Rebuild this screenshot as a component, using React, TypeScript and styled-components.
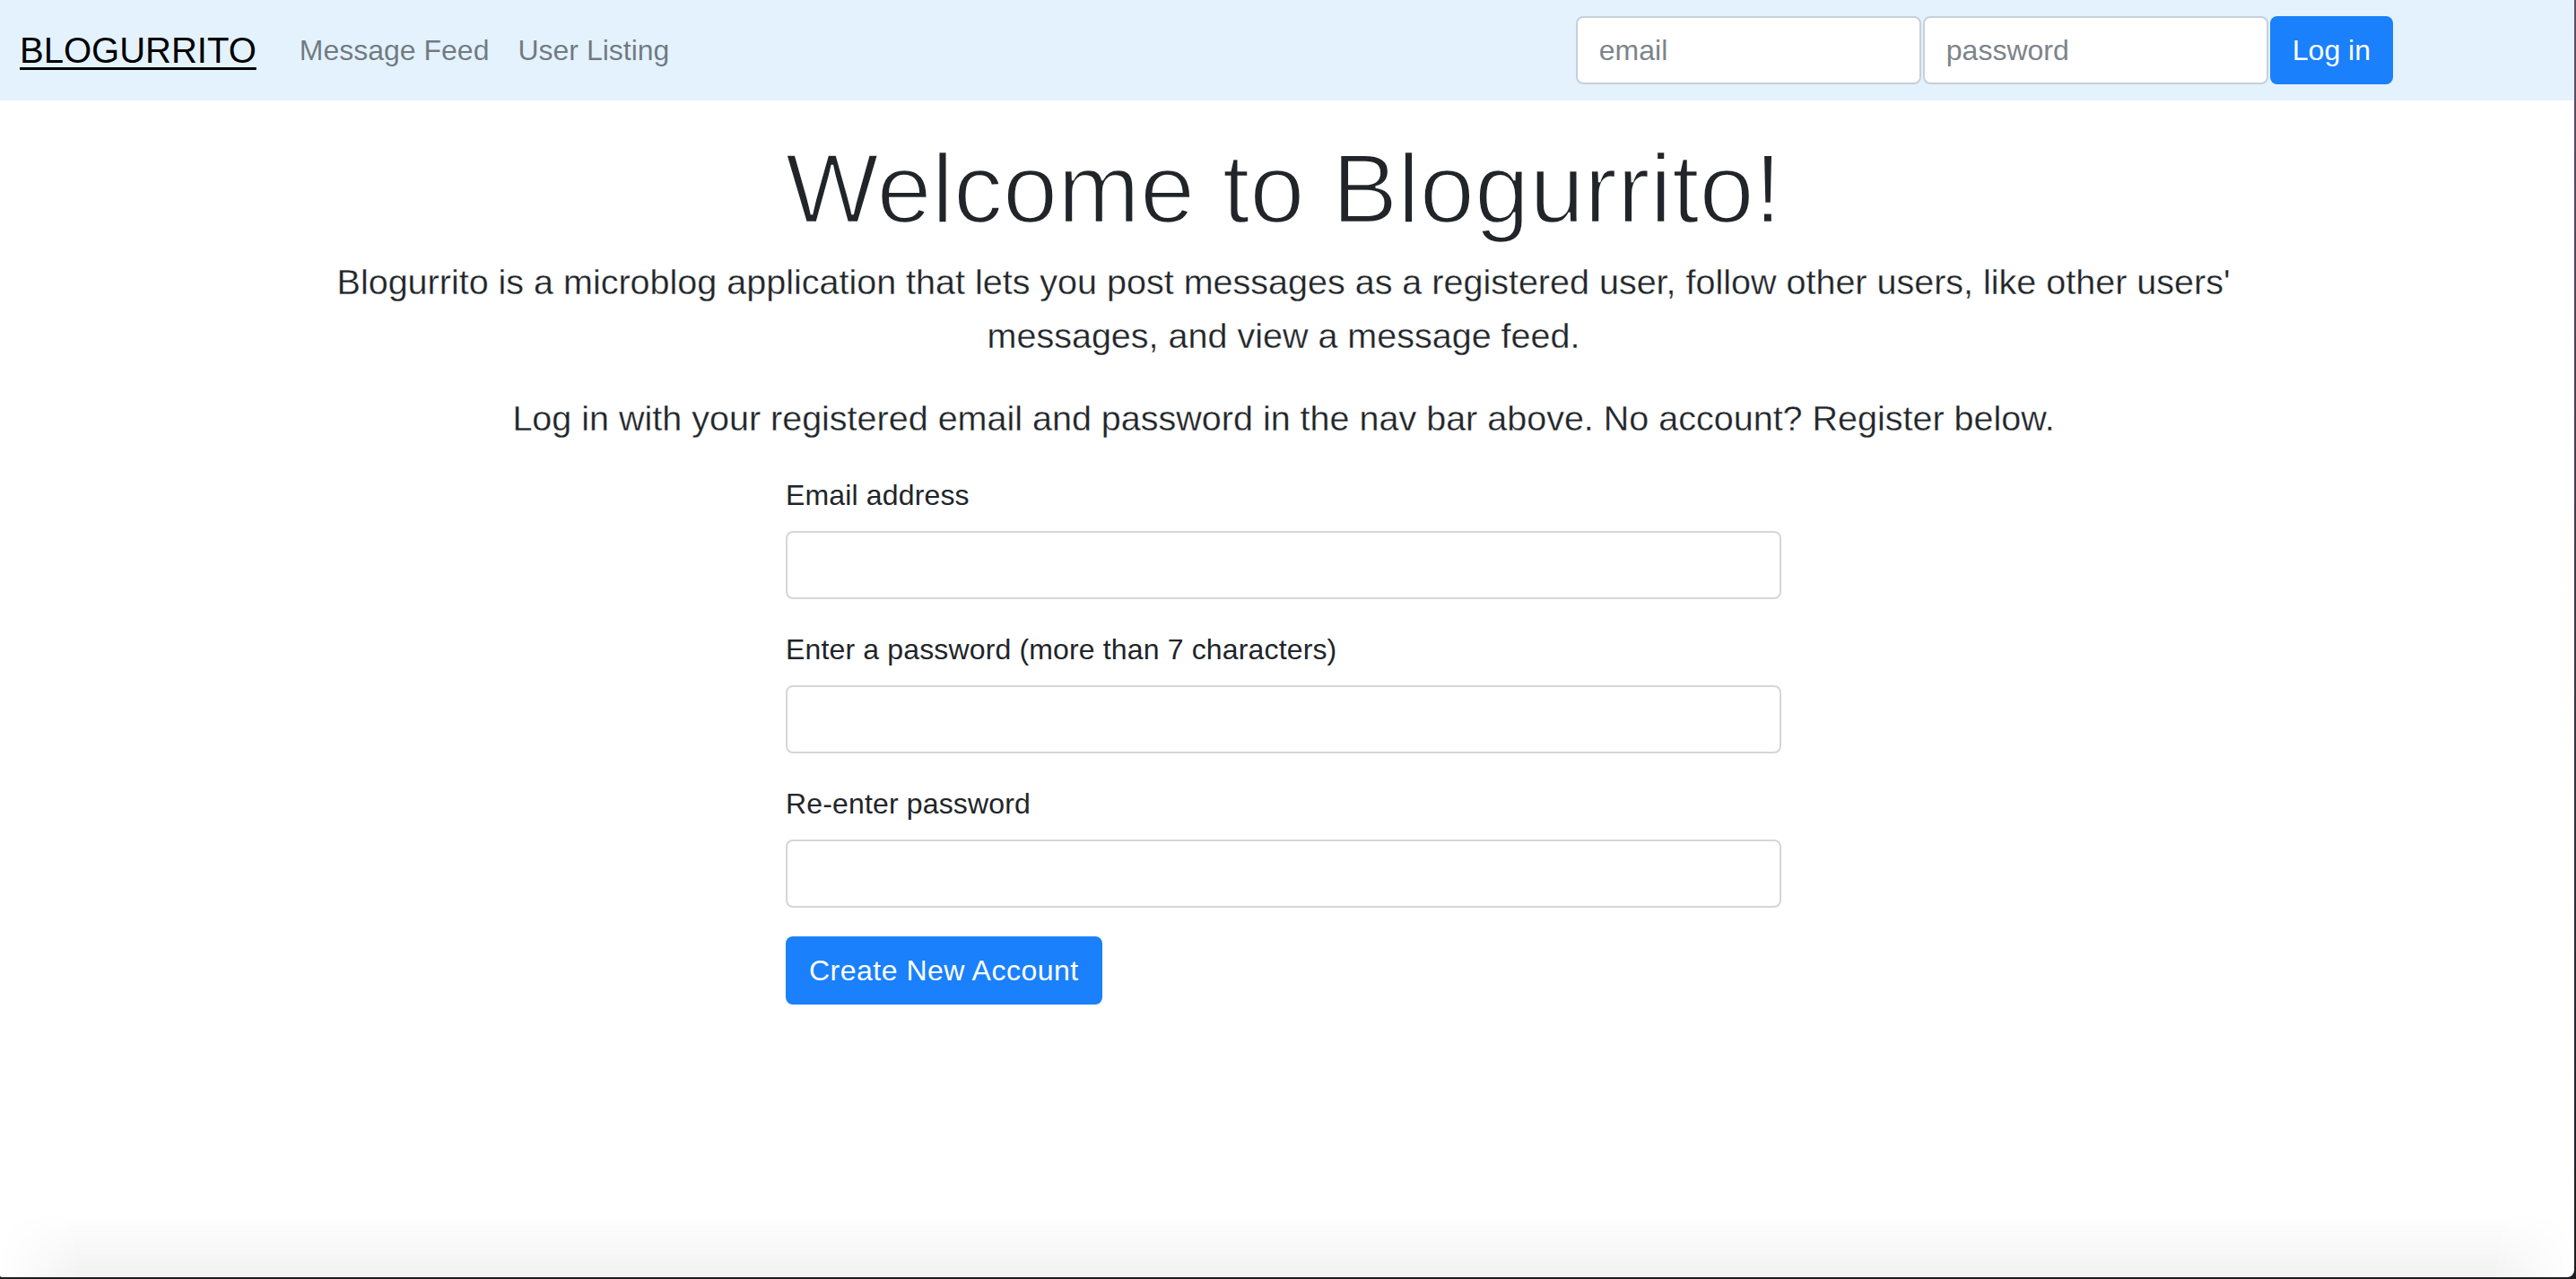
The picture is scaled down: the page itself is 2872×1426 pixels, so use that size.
import React from "react";
import styled, { createGlobalStyle } from "styled-components";

const GlobalStyle = createGlobalStyle`
  html, body {
    margin: 0;
    padding: 0;
    background: #3b3440;
  }
  * { box-sizing: border-box; }
`;

const Desktop = styled.div`
  width: 2872px;
  height: 1426px;
  background: linear-gradient(to bottom, #5e5068 0%, #3a3340 60%, #1d1b20 100%);
  overflow: hidden;
`;

const Window = styled.div`
  position: relative;
  width: 2870px;
  height: 1424px;
  background: #ffffff;
  border-bottom-right-radius: 8px;
  border-bottom-left-radius: 2px;
  overflow: hidden;
  font-family: "Liberation Sans", Arial, sans-serif;
  color: #212529;

  &::after {
    content: "";
    position: absolute;
    left: 0;
    right: 0;
    bottom: 0;
    height: 72px;
    pointer-events: none;
    background: linear-gradient(to bottom, rgba(0, 0, 0, 0) 0%, rgba(0, 0, 0, 0.05) 100%);
    -webkit-mask-image: linear-gradient(to right, transparent 0, #000 90px, #000 calc(100% - 90px), transparent 100%);
    mask-image: linear-gradient(to right, transparent 0, #000 90px, #000 calc(100% - 90px), transparent 100%);
  }
`;

const NavBar = styled.nav`
  height: 112px;
  background: #e3f2fd;
  display: flex;
  align-items: center;
  padding: 0 202px 0 22px;
`;

const Brand = styled.a`
  font-size: 40px;
  line-height: 60px;
  color: #000;
  text-decoration: underline;
  text-decoration-thickness: 3px;
  text-underline-offset: 5px;
  margin-right: 32px;
  cursor: pointer;
`;

const NavLinks = styled.div`
  display: flex;
  align-items: center;
`;

const NavLink = styled.a`
  font-size: 32px;
  line-height: 48px;
  padding: 16px;
  color: rgba(0, 0, 0, 0.5);
  cursor: pointer;
`;

const LoginForm = styled.form`
  margin-left: auto;
  display: flex;
  align-items: center;
  gap: 2px;
`;

const NavInput = styled.input`
  width: 385px;
  height: 76px;
  padding: 0 24px;
  font-family: "Liberation Sans", Arial, sans-serif;
  font-size: 32px;
  color: #495057;
  background: #fff;
  border: 2px solid #c7d0d9;
  border-radius: 8px;
  outline: none;

  &::placeholder {
    color: #7c848b;
  }
`;

const Button = styled.button<{ $wide?: boolean }>`
  height: 76px;
  padding: 0 ${(p) => (p.$wide ? "26px" : "25px")};
  font-family: "Liberation Sans", Arial, sans-serif;
  font-size: 32px;
  letter-spacing: ${(p) => (p.$wide ? "0.5px" : "0")};
  color: #fff;
  background: #1a80fb;
  border: none;
  border-radius: 8px;
  cursor: pointer;
`;

const Main = styled.main`
  padding: 32px 8px 0 0;
`;

const Container = styled.div`
  width: 2220px;
  margin: 0 auto;
  text-align: center;
`;

const Title = styled.h1`
  margin: 0 0 8px;
  font-size: 110px;
  font-weight: 300;
  line-height: 132px;
  color: #212529;
  -webkit-text-stroke: 2.5px #ffffff;
  paint-order: fill stroke;
`;

const Lead = styled.p`
  margin: 0 0 32px;
  font-size: 39.5px;
  font-weight: 300;
  line-height: 60px;
  color: #212529;
  -webkit-text-stroke: 0.3px #ffffff;
  paint-order: fill stroke;
`;

const SignupForm = styled.form`
  width: 1110px;
  margin: 0 auto;
  text-align: left;
`;

const FormGroup = styled.div`
  margin-bottom: 32px;
`;

const Label = styled.label`
  display: block;
  margin-bottom: 16px;
  font-size: 32px;
  line-height: 48px;
  letter-spacing: 0.15px;
  color: #212529;
`;

const FormInput = styled.input`
  display: block;
  width: 100%;
  height: 76px;
  padding: 0 24px;
  font-family: "Liberation Sans", Arial, sans-serif;
  font-size: 32px;
  background: #fff;
  border: 2px solid #d6d6d6;
  border-radius: 8px;
  outline: none;
`;

export default function App() {
  return (
    <>
      <GlobalStyle />
      <Desktop>
        <Window>
          <NavBar>
            <Brand>BLOGURRITO</Brand>
            <NavLinks>
              <NavLink>Message Feed</NavLink>
              <NavLink>User Listing</NavLink>
            </NavLinks>
            <LoginForm onSubmit={(e) => e.preventDefault()}>
              <NavInput type="email" placeholder="email" />
              <NavInput type="password" placeholder="password" />
              <Button type="submit">Log in</Button>
            </LoginForm>
          </NavBar>
          <Main>
            <Container>
              <Title>Welcome to Blogurrito!</Title>
              <Lead>
                Blogurrito is a microblog application that lets you post messages as a registered user, follow other
                users, like other users' messages, and view a message feed.
              </Lead>
              <Lead>Log in with your registered email and password in the nav bar above. No account? Register below.</Lead>
              <SignupForm onSubmit={(e) => e.preventDefault()}>
                <FormGroup>
                  <Label htmlFor="email">Email address</Label>
                  <FormInput id="email" type="email" />
                </FormGroup>
                <FormGroup>
                  <Label htmlFor="pw1">Enter a password (more than 7 characters)</Label>
                  <FormInput id="pw1" type="password" />
                </FormGroup>
                <FormGroup>
                  <Label htmlFor="pw2">Re-enter password</Label>
                  <FormInput id="pw2" type="password" />
                </FormGroup>
                <Button type="submit" $wide>
                  Create New Account
                </Button>
              </SignupForm>
            </Container>
          </Main>
        </Window>
      </Desktop>
    </>
  );
}
